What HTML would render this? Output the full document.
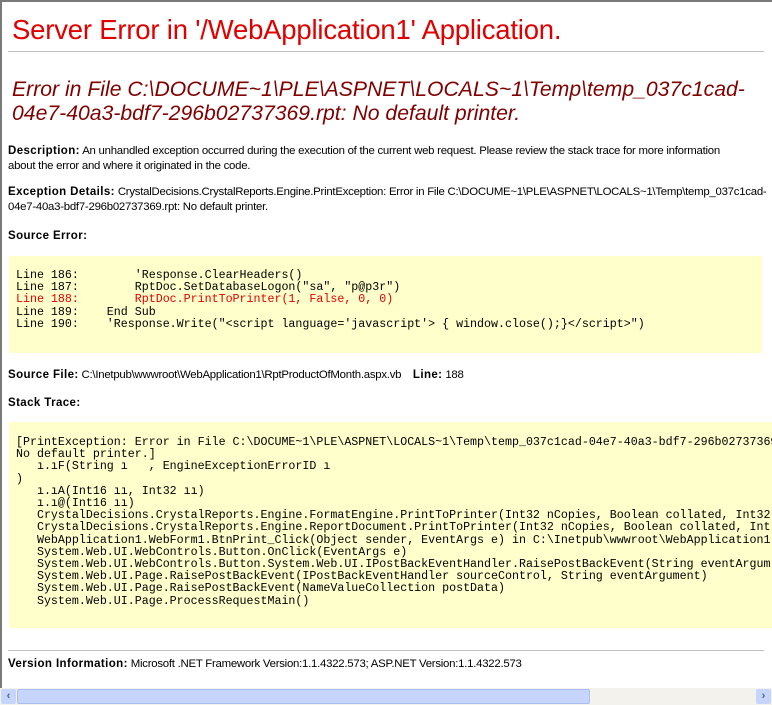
<!DOCTYPE html>
<html><head><meta charset="utf-8">
<style>
html,body{margin:0;padding:0;background:#fff;}
body{width:772px;height:705px;overflow:hidden;position:relative;font-family:"Liberation Sans",Arial,sans-serif;color:#000;}
.brd{position:absolute;left:0;top:0;width:770px;height:703px;border-left:2px solid #7a7a7a;border-top:2px solid #7a7a7a;}
h1{position:absolute;left:12px;top:14px;margin:0;font-weight:normal;font-size:27.5px;color:#e00000;white-space:nowrap;letter-spacing:-0.2px;}
.hr1{position:absolute;left:8px;top:51px;width:756px;height:1px;background:#c0c0c0;}
h2{position:absolute;left:12px;top:78px;margin:0;font-weight:normal;font-style:italic;font-size:21.2px;line-height:24px;color:#800000;white-space:nowrap;}
.t{font-size:11.4px;line-height:15px;position:absolute;left:8px;white-space:nowrap;letter-spacing:-0.25px;}
.t b{font-size:11.5px;letter-spacing:0.4px;}
.box{position:absolute;background:#ffffcc;overflow:hidden;}
pre{margin:0;font-family:"Liberation Mono","DejaVu Sans Mono",monospace;font-size:11.65px;line-height:12.2px;position:absolute;white-space:pre;}
.r{color:#e00000;}
.hr2{position:absolute;left:8px;top:650px;width:756px;height:1px;background:#c0c0c0;}
.sb{position:absolute;left:0;top:688px;width:772px;height:17px;background:#f3f2ec;}
.th{position:absolute;left:17px;top:689px;width:573px;height:15px;background:#c5d5fb;border:1px solid #a8bdf0;border-radius:2px;box-sizing:border-box;}
.btn{position:absolute;top:689px;width:15px;height:15px;background:#c5d5fb;border-radius:2px;color:#4d6185;font-size:11px;line-height:15px;text-align:center;font-weight:bold;}
</style></head><body>
<div class="brd"></div>
<h1>Server Error in '/WebApplication1' Application.</h1>
<div class="hr1"></div>
<h2>Error in File C:\DOCUME~1\PLE\ASPNET\LOCALS~1\Temp\temp_037c1cad-<br>04e7-40a3-bdf7-296b02737369.rpt: No default printer.</h2>
<div class="t" style="top:144px"><b>Description:</b> An unhandled exception occurred during the execution of the current web request. Please review the stack trace for more information<br>about the error and where it originated in the code.</div>
<div class="t" style="top:185px"><b>Exception Details:</b> CrystalDecisions.CrystalReports.Engine.PrintException: Error in File C:\DOCUME~1\PLE\ASPNET\LOCALS~1\Temp\temp_037c1cad-<br>04e7-40a3-bdf7-296b02737369.rpt: No default printer.</div>
<div class="t" style="top:229px"><b>Source Error:</b></div>
<div class="box" style="left:9px;top:256px;width:753px;height:97px;"></div>
<pre style="left:16px;top:270px;">Line 186:        'Response.ClearHeaders()
Line 187:        RptDoc.SetDatabaseLogon("sa", "p@p3r")
<span class="r">Line 188:        RptDoc.PrintToPrinter(1, False, 0, 0)</span>
Line 189:    End Sub
Line 190:    'Response.Write("&lt;script language='javascript'&gt; { window.close();}&lt;/script&gt;")</pre>
<div class="t" style="top:368px"><b>Source File:</b> C:\Inetpub\wwwroot\WebApplication1\RptProductOfMonth.aspx.vb &nbsp;&nbsp;&nbsp;<b>Line:</b> 188</div>
<div class="t" style="top:396px"><b>Stack Trace:</b></div>
<div class="box" style="left:9px;top:422px;width:763px;height:206px;">
<pre style="left:7px;top:15px;">[PrintException: Error in File C:\DOCUME~1\PLE\ASPNET\LOCALS~1\Temp\temp_037c1cad-04e7-40a3-bdf7-296b02737369.rpt:
No default printer.]
   ı.ıF(String ı   , EngineExceptionErrorID ı
)
   ı.ıA(Int16 ıı, Int32 ıı)
   ı.ı@(Int16 ıı)
   CrystalDecisions.CrystalReports.Engine.FormatEngine.PrintToPrinter(Int32 nCopies, Boolean collated, Int32
   CrystalDecisions.CrystalReports.Engine.ReportDocument.PrintToPrinter(Int32 nCopies, Boolean collated, Int
   WebApplication1.WebForm1.BtnPrint_Click(Object sender, EventArgs e) in C:\Inetpub\wwwroot\WebApplication1
   System.Web.UI.WebControls.Button.OnClick(EventArgs e)
   System.Web.UI.WebControls.Button.System.Web.UI.IPostBackEventHandler.RaisePostBackEvent(String eventArgum
   System.Web.UI.Page.RaisePostBackEvent(IPostBackEventHandler sourceControl, String eventArgument)
   System.Web.UI.Page.RaisePostBackEvent(NameValueCollection postData)
   System.Web.UI.Page.ProcessRequestMain()</pre>
</div>
<div class="hr2"></div>
<div class="t" style="top:657px"><b>Version Information:</b> Microsoft .NET Framework Version:1.1.4322.573; ASP.NET Version:1.1.4322.573</div>
<div class="sb"></div>
<div class="th"></div>
<div class="btn" style="left:1px;">‹</div>
<div class="btn" style="left:756px;">›</div>
</body></html>
